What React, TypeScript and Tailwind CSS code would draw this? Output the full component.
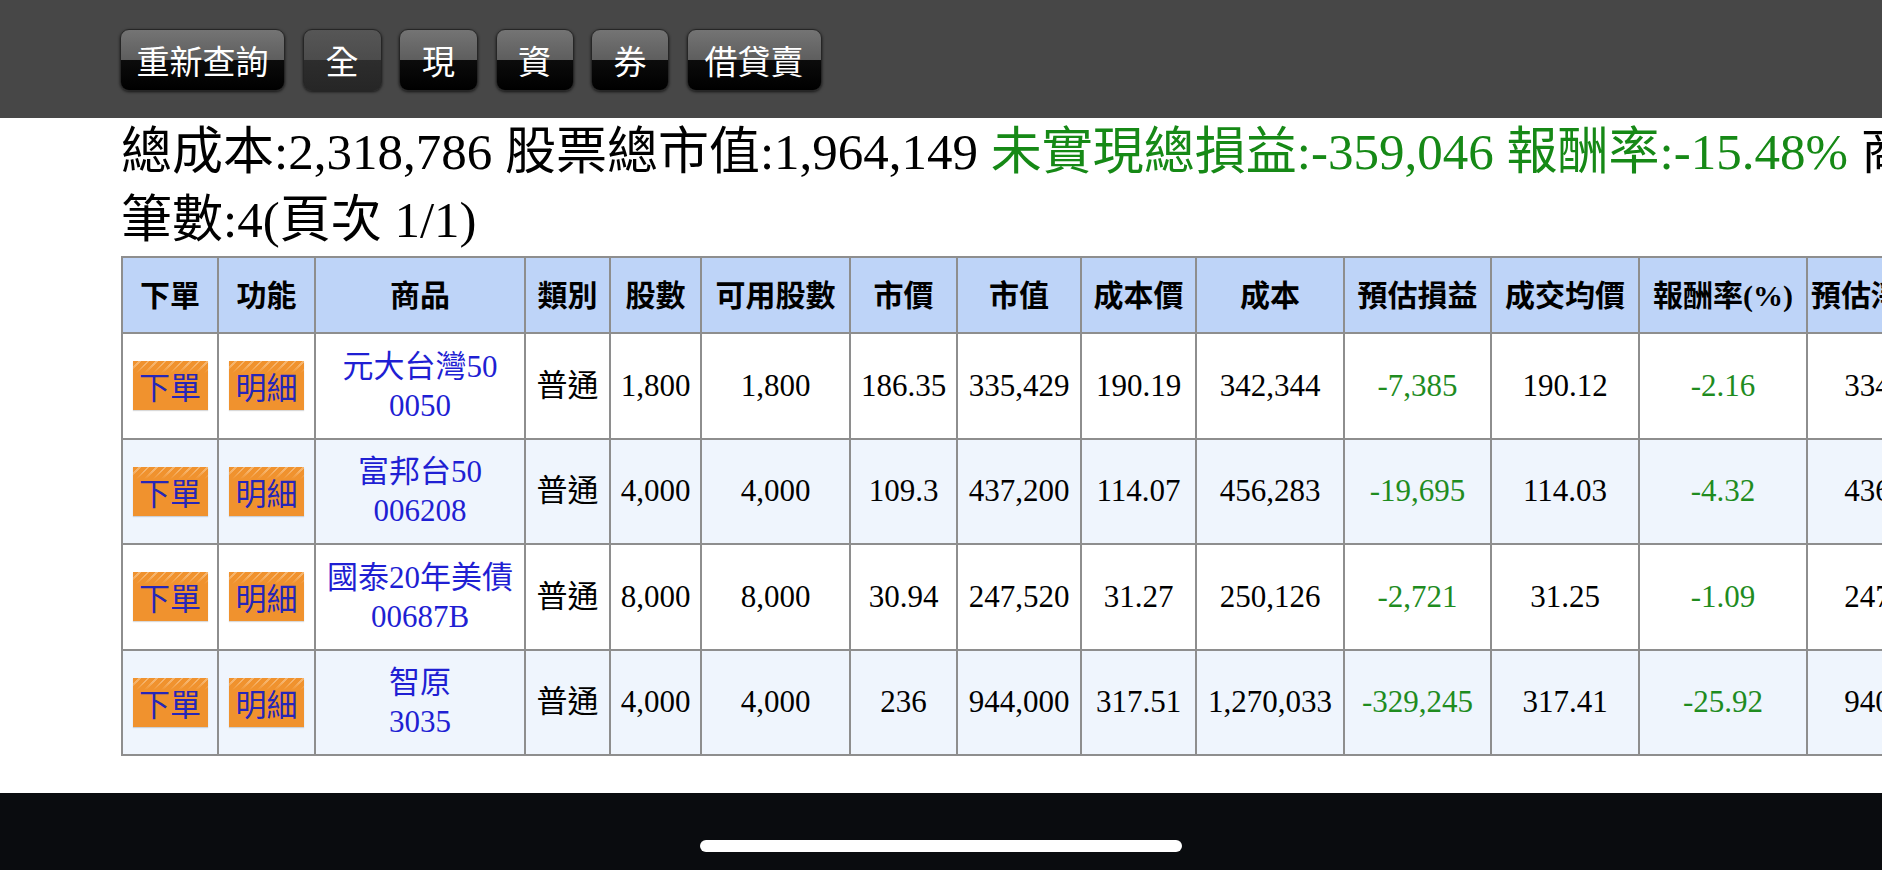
import React from "react";

type Row = {
  name: string;
  code: string;
  type: string;
  qty: string;
  avail: string;
  price: string;
  mv: string;
  cp: string;
  cost: string;
  pl: string;
  avg: string;
  rr: string;
  est: string;
};

const rows: Row[] = [
  { name: "元大台灣50", code: "0050", type: "普通", qty: "1,800", avail: "1,800", price: "186.35", mv: "335,429", cp: "190.19", cost: "342,344", pl: "-7,385", avg: "190.12", rr: "-2.16", est: "334,616" },
  { name: "富邦台50", code: "006208", type: "普通", qty: "4,000", avail: "4,000", price: "109.3", mv: "437,200", cp: "114.07", cost: "456,283", pl: "-19,695", avg: "114.03", rr: "-4.32", est: "436,140" },
  { name: "國泰20年美債", code: "00687B", type: "普通", qty: "8,000", avail: "8,000", price: "30.94", mv: "247,520", cp: "31.27", cost: "250,126", pl: "-2,721", avg: "31.25", rr: "-1.09", est: "247,168" },
  { name: "智原", code: "3035", type: "普通", qty: "4,000", avail: "4,000", price: "236", mv: "944,000", cp: "317.51", cost: "1,270,033", pl: "-329,245", avg: "317.41", rr: "-25.92", est: "940,361" },
];

const headers = ["下單", "功能", "商品", "類別", "股數", "可用股數", "市價", "市值", "成本價", "成本", "預估損益", "成交均價", "報酬率(%)", "預估淨收付額"];

const FONT = "font-['Liberation_Serif','Noto_Sans_CJK_TC',serif]";

function clsxLite(...c: (string | false | undefined)[]) {
  return c.filter(Boolean).join(" ");
}

function TopButton({ label, w, active }: { label: string; w: string; active?: boolean }) {
  return (
    <div
      className={clsxLite(
        "flex h-[62px] items-center justify-center rounded-[9px] border border-[#262626] text-[33px] leading-none text-white shadow-[0_1px_3px_rgba(0,0,0,0.7)] font-['Noto_Sans_CJK_TC',sans-serif]",
        w,
        active
          ? "bg-[linear-gradient(180deg,#565656_0%,#4c4c4c_50%,#2d2d2d_50%,#262626_100%)]"
          : "bg-[linear-gradient(180deg,#747474_0%,#5e5e5e_50%,#0c0c0c_50%,#000000_100%)]"
      )}
    >
      {label}
    </div>
  );
}

function OrangeBtn({ label }: { label: string }) {
  return (
    <div className="mx-auto flex h-[49px] w-[75px] items-center justify-center bg-[#f0922e] bg-[linear-gradient(180deg,rgba(240,146,46,0)_0px,rgba(240,146,46,0)_4px,#f0922e_12px),repeating-linear-gradient(135deg,#f0922e_0px,#f0922e_4px,#f6b46c_4px,#f6b46c_6px)] text-[31px] leading-none text-[#2626b8] shadow-[0_1px_1px_rgba(0,0,0,0.15)] font-['Noto_Sans_CJK_TC',sans-serif]">
      {label}
    </div>
  );
}

const cell = "border-2 border-[#8e8e8e] px-[3px] text-center align-middle";

export default function App() {
  return (
    <div className={`flex h-[870px] w-[1882px] flex-col overflow-hidden bg-white ${FONT}`}>
      <div className="flex h-[118px] shrink-0 items-start gap-[17.5px] bg-[#474747] pl-[120px] pt-[29px]">
        <TopButton label="重新查詢" w="w-[165px]" />
        <TopButton label="全" w="w-[79px]" active />
        <TopButton label="現" w="w-[79px]" />
        <TopButton label="資" w="w-[78px]" />
        <TopButton label="券" w="w-[78px]" />
        <TopButton label="借貸賣" w="w-[135px]" />
      </div>

      <div className="flex-1 overflow-hidden pl-[121px]">
        <div className="whitespace-nowrap text-[51px] leading-[68px] text-black">
          總成本:2,318,786 股票總市值:1,964,149{" "}
          <span className="text-[#168916]">未實現總損益:-359,046 報酬率:-15.48%</span> 商品總數:4
        </div>
        <div className="whitespace-nowrap text-[51px] leading-[68px] text-black">筆數:4(頁次 1/1)</div>

        <table className="mt-[2px] w-[1860px] table-fixed border-collapse">
          <colgroup>
            <col className="w-[96px]" />
            <col className="w-[97px]" />
            <col className="w-[210px]" />
            <col className="w-[85px]" />
            <col className="w-[91px]" />
            <col className="w-[149px]" />
            <col className="w-[107px]" />
            <col className="w-[124px]" />
            <col className="w-[115px]" />
            <col className="w-[148px]" />
            <col className="w-[147px]" />
            <col className="w-[148px]" />
            <col className="w-[168px]" />
            <col className="w-[175px]" />
          </colgroup>
          <thead>
            <tr className="h-[76px] bg-[#bed4f8]">
              {headers.map((h) => (
                <th key={h} className={`${cell} whitespace-nowrap text-[30px] font-bold text-black`}>
                  {h}
                </th>
              ))}
            </tr>
          </thead>
          <tbody>
            {rows.map((r, i) => (
              <tr key={r.code} className={i % 2 === 0 ? "h-[105.5px] bg-white" : "h-[105.5px] bg-[#eff5fd]"}>
                <td className={cell}>
                  <OrangeBtn label="下單" />
                </td>
                <td className={cell}>
                  <OrangeBtn label="明細" />
                </td>
                <td className={`${cell} text-[31px] leading-[39px] text-[#1f1fd3]`}>
                  <div className="whitespace-nowrap">{r.name}</div>
                  <div>{r.code}</div>
                </td>
                <td className={`${cell} text-[31px] text-black`}>{r.type}</td>
                <td className={`${cell} text-[31px] text-black`}>{r.qty}</td>
                <td className={`${cell} text-[31px] text-black`}>{r.avail}</td>
                <td className={`${cell} text-[31px] text-black`}>{r.price}</td>
                <td className={`${cell} text-[31px] text-black`}>{r.mv}</td>
                <td className={`${cell} text-[31px] text-black`}>{r.cp}</td>
                <td className={`${cell} text-[31px] text-black`}>{r.cost}</td>
                <td className={`${cell} text-[31px] text-[#1f8c1f]`}>{r.pl}</td>
                <td className={`${cell} text-[31px] text-black`}>{r.avg}</td>
                <td className={`${cell} text-[31px] text-[#1f8c1f]`}>{r.rr}</td>
                <td className={`${cell} text-[31px] text-black`}>{r.est}</td>
              </tr>
            ))}
          </tbody>
        </table>
      </div>

      <div className="flex h-[77px] shrink-0 justify-center bg-[#0a0c0f] pt-[47px]">
        <div className="h-[12px] w-[482px] rounded-full bg-white" />
      </div>
    </div>
  );
}
